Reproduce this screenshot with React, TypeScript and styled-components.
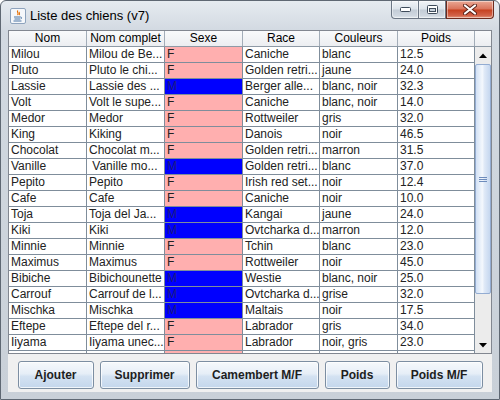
import styled, { createGlobalStyle } from "styled-components";

const GlobalStyle = createGlobalStyle`
  html, body {
    margin: 0;
    padding: 0;
    background: #ffffff;
  }
  body {
    font-family: "Liberation Sans", Arial, sans-serif;
  }
`;

const GRID = "#7f8d9b";

const Window = styled.div`
  width: 500px;
  height: 400px;
  box-sizing: border-box;
  border: 1px solid #5f6873;
  border-radius: 6px 6px 0 0;
  background: linear-gradient(#e6ebf0, #d2d9e1 30px, #c9d0d8);
  padding: 0 7px 7px 7px;
  display: flex;
  flex-direction: column;
`;

const TitleBar = styled.div`
  height: 29px;
  display: flex;
  align-items: flex-start;
  flex-shrink: 0;
`;

const AppIcon = styled.svg`
  margin: 7px 4px 0 2px;
  flex-shrink: 0;
`;

const Title = styled.span`
  font-size: 13px;
  color: #000;
  margin-top: 7px;
`;

const Captions = styled.div`
  margin-left: auto;
  margin-right: -2px;
  display: flex;
`;

const CaptionButton = styled.div<{ $w: number; $close?: boolean; $first?: boolean }>`
  width: ${(p) => p.$w}px;
  height: 18px;
  box-sizing: border-box;
  border: 1px solid ${(p) => (p.$close ? "#6e2b1e" : "#6b7684")};
  border-top: none;
  border-left: ${(p) => (p.$first || p.$close ? "1px" : "0")} solid ${(p) => (p.$close ? "#6e2b1e" : "#6b7684")};
  border-radius: ${(p) => (p.$first ? "0 0 0 4px" : p.$close ? "0 0 4px 0" : "0")};
  background: ${(p) =>
    p.$close
      ? "linear-gradient(#eaa895, #d9725a 48%, #c6401f 52%, #d26248 85%, #e59a7f)"
      : "linear-gradient(#f1f4f7, #dce3ea 48%, #c3ccd6 52%, #cfd7e0 85%, #e2e8ee)"};
  box-shadow: inset 0 0 0 1px rgba(255, 255, 255, 0.45);
  display: flex;
  align-items: center;
  justify-content: center;
`;

const Content = styled.div`
  flex: 1;
  background: #f0f0f0;
  display: flex;
  flex-direction: column;
`;

const ScrollPane = styled.div`
  height: 324px;
  box-sizing: border-box;
  border: 1px solid #828790;
  background: #ffffff;
  display: flex;
  flex-shrink: 0;
`;

const TableArea = styled.div`
  width: 466px;
  display: flex;
  flex-direction: column;
`;

const HeaderRow = styled.div`
  display: flex;
  height: 16px;
  box-sizing: border-box;
  border-bottom: 1px solid #8e9aa6;
  background: linear-gradient(#f9fafb, #eceef1);
`;

const HeaderCell = styled.div<{ $w: number }>`
  width: ${(p) => p.$w}px;
  box-sizing: border-box;
  border-right: 1px solid #a3adb8;
  font-size: 12px;
  line-height: 15px;
  color: #000;
  text-align: center;
  white-space: nowrap;
  overflow: hidden;
`;

const Viewport = styled.div`
  flex: 1;
  overflow: hidden;
`;

const Row = styled.div`
  display: flex;
  height: 16px;
`;

const Cell = styled.div<{ $w: number; $sex?: "F" | "M" }>`
  width: ${(p) => p.$w}px;
  height: 16px;
  box-sizing: border-box;
  border-right: 1px solid ${GRID};
  border-bottom: 1px solid ${GRID};
  padding-left: 2px;
  font-size: 12px;
  line-height: 15px;
  white-space: pre;
  overflow: hidden;
  color: ${(p) => (p.$sex === "M" ? "#1c1c80" : "#222222")};
  background: ${(p) => (p.$sex === "F" ? "#ffafaf" : p.$sex === "M" ? "#0000ff" : "#ffffff")};
`;

const ScrollBar = styled.div`
  width: 16px;
  display: flex;
  flex-direction: column;
  background: #ececec;
`;

const Corner = styled.div`
  height: 16px;
  box-sizing: border-box;
  border-bottom: 1px solid #8e9aa6;
  background: linear-gradient(#f9fafb, #eceef1);
`;

const ArrowButton = styled.div`
  height: 16px;
  display: flex;
  align-items: center;
  justify-content: center;
`;

const Thumb = styled.div`
  height: 230px;
  box-sizing: border-box;
  border: 1px solid #93acd2;
  border-radius: 2px;
  background: linear-gradient(90deg, #d2e1f5, #f4f8fd 45%, #dfe9f7 60%, #c5d7ef);
  display: flex;
  align-items: center;
  justify-content: center;
  margin-top: 1px;
`;

const Grip = styled.div`
  width: 8px;
  height: 5px;
  background: repeating-linear-gradient(#6e8cbc 0 1px, transparent 1px 2px);
`;

const Track = styled.div`
  flex: 1;
`;

const ButtonBar = styled.div`
  display: flex;
  justify-content: center;
  gap: 6px;
  padding-top: 7px;
`;

const ActionButton = styled.button<{ $w: number }>`
  width: ${(p) => p.$w}px;
  height: 28px;
  box-sizing: border-box;
  border: 1px solid #7c8ea2;
  border-radius: 3px;
  background: linear-gradient(#f6f9fc, #e6eef7 45%, #d4e2f2 55%, #c3d6ec);
  box-shadow: inset 0 0 0 1px rgba(255, 255, 255, 0.75);
  font-family: "Liberation Sans", Arial, sans-serif;
  font-weight: bold;
  font-size: 12px;
  line-height: 26px;
  color: #1e1e1e;
  padding: 0;
  white-space: nowrap;
`;

const widths = [78, 78, 78, 77, 78, 77];
const headers = ["Nom", "Nom complet", "Sexe", "Race", "Couleurs", "Poids"];

type Dog = [string, string, "F" | "M", string, string, string];

const dogs: Dog[] = [
  ["Milou", "Milou de Be...", "F", "Caniche", "blanc", "12.5"],
  ["Pluto", "Pluto le chi...", "F", "Golden retri...", "jaune", "24.0"],
  ["Lassie", "Lassie des ...", "M", "Berger alle...", "blanc, noir", "32.3"],
  ["Volt", "Volt le supe...", "F", "Caniche", "blanc, noir", "14.0"],
  ["Medor", "Medor", "F", "Rottweiler", "gris", "32.0"],
  ["King", "Kiking", "F", "Danois", "noir", "46.5"],
  ["Chocolat", "Chocolat m...", "F", "Golden retri...", "marron", "31.5"],
  ["Vanille", " Vanille mo...", "M", "Golden retri...", "blanc", "37.0"],
  ["Pepito", "Pepito", "F", "Irish red set...", "noir", "12.4"],
  ["Cafe", "Cafe", "F", "Caniche", "noir", "10.0"],
  ["Toja", "Toja del Ja...", "M", "Kangai", "jaune", "24.0"],
  ["Kiki", "Kiki", "M", "Ovtcharka d...", "marron", "12.0"],
  ["Minnie", "Minnie", "F", "Tchin", "blanc", "23.0"],
  ["Maximus", "Maximus", "F", "Rottweiler", "noir", "45.0"],
  ["Bibiche", "Bibichounette", "M", "Westie", "blanc, noir", "25.0"],
  ["Carrouf", "Carrouf de l...", "M", "Ovtcharka d...", "grise", "32.0"],
  ["Mischka", "Mischka", "M", "Maltais", "noir", "17.5"],
  ["Eftepe", "Eftepe del r...", "F", "Labrador", "gris", "34.0"],
  ["Iiyama", "Iiyama unec...", "F", "Labrador", "noir, gris", "23.0"],
];

const buttons: [string, number][] = [
  ["Ajouter", 76],
  ["Supprimer", 90],
  ["Camembert M/F", 123],
  ["Poids", 65],
  ["Poids M/F", 87],
];

function JavaIcon() {
  return (
    <AppIcon width="16" height="16" viewBox="0 0 16 16">
      <rect x="0.5" y="0.5" width="15" height="15" rx="1.5" fill="#f6f8fb" stroke="#8ea3bd" />
      <path d="M8 2.5c-2 1.5 1.5 2.5 -0.5 4.5M9.5 4c-1 1 1 1.5 -0.5 3" stroke="#e76f00" strokeWidth="1.1" fill="none" />
      <path d="M4 9h6.5M4.5 11h5.5M3.5 13h8" stroke="#4a75a4" strokeWidth="1" fill="none" />
      <path d="M10.5 9c1.5 0 1.5 1.8 0 2" stroke="#4a75a4" strokeWidth="0.9" fill="none" />
    </AppIcon>
  );
}

export default function App() {
  return (
    <>
      <GlobalStyle />
      <Window>
        <TitleBar>
          <JavaIcon />
          <Title>Liste des chiens (v7)</Title>
          <Captions>
            <CaptionButton $w={28} $first>
              <svg width="11" height="5" viewBox="0 0 11 5">
                <rect x="0.5" y="0.5" width="10" height="4" rx="1" fill="#ffffff" stroke="#3e4b5a" />
              </svg>
            </CaptionButton>
            <CaptionButton $w={27}>
              <svg width="11" height="9" viewBox="0 0 11 9">
                <rect x="0.5" y="0.5" width="10" height="8" rx="1" fill="#ffffff" stroke="#3e4b5a" />
                <rect x="2.5" y="3.5" width="6" height="3" fill="#c9d2dc" stroke="#3e4b5a" />
              </svg>
            </CaptionButton>
            <CaptionButton $w={48} $close>
              <svg width="14" height="11" viewBox="0 0 14 11">
                <path d="M2 1.5L12 9.5M12 1.5L2 9.5" stroke="#5a2218" strokeWidth="4" strokeLinecap="round" />
                <path d="M2 1.5L12 9.5M12 1.5L2 9.5" stroke="#ffffff" strokeWidth="2.2" strokeLinecap="round" />
              </svg>
            </CaptionButton>
          </Captions>
        </TitleBar>
        <Content>
          <ScrollPane>
            <TableArea>
              <HeaderRow>
                {headers.map((h, i) => (
                  <HeaderCell key={h} $w={widths[i]}>
                    {h}
                  </HeaderCell>
                ))}
              </HeaderRow>
              <Viewport>
                {dogs.map((d, r) => (
                  <Row key={r}>
                    {d.map((v, i) => (
                      <Cell key={i} $w={widths[i]} $sex={i === 2 ? (v as "F" | "M") : undefined}>
                        {v}
                      </Cell>
                    ))}
                  </Row>
                ))}
                {/* next row, only its top edge shows */}
                <Row>
                  {widths.map((w, i) => (
                    <Cell key={i} $w={w} $sex={i === 2 ? "F" : undefined} />
                  ))}
                </Row>
              </Viewport>
            </TableArea>
            <ScrollBar>
              <Corner />
              <ArrowButton>
                <svg width="8" height="5" viewBox="0 0 8 5">
                  <path d="M0 5L4 0.5L8 5Z" fill="#000" />
                </svg>
              </ArrowButton>
              <Thumb>
                <Grip />
              </Thumb>
              <Track />
              <ArrowButton>
                <svg width="8" height="5" viewBox="0 0 8 5">
                  <path d="M0 0L4 4.5L8 0Z" fill="#000" />
                </svg>
              </ArrowButton>
            </ScrollBar>
          </ScrollPane>
          <ButtonBar>
            {buttons.map(([label, w]) => (
              <ActionButton key={label} $w={w}>
                {label}
              </ActionButton>
            ))}
          </ButtonBar>
        </Content>
      </Window>
    </>
  );
}
